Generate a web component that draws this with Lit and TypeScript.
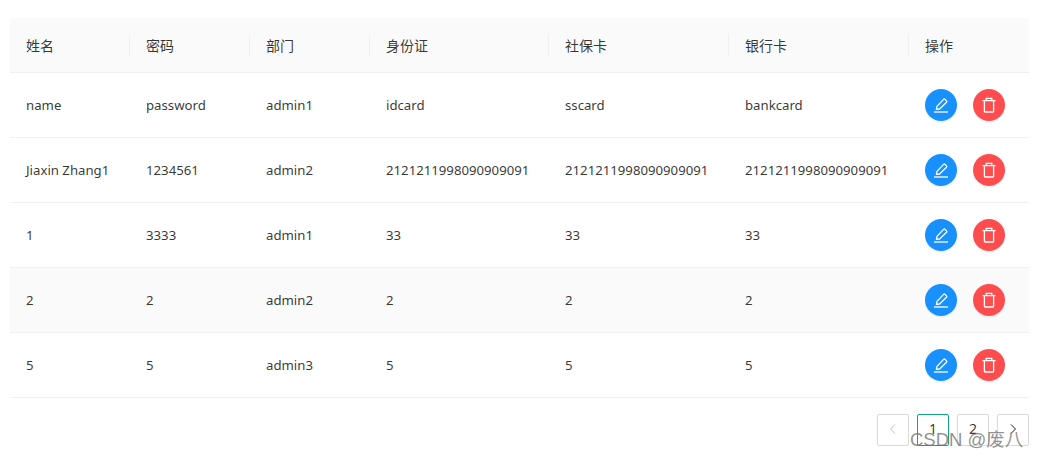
import { LitElement, html, css, svg } from "lit";
import { customElement } from "lit/decorators.js";

const HEAD = ["姓名", "密码", "部门", "身份证", "社保卡", "银行卡", "操作"];
const ROWS = [
  ["name", "password", "admin1", "idcard", "sscard", "bankcard"],
  ["Jiaxin Zhang1", "1234561", "admin2", "2121211998090909091", "2121211998090909091", "2121211998090909091"],
  ["1", "3333", "admin1", "33", "33", "33"],
  ["2", "2", "admin2", "2", "2", "2"],
  ["5", "5", "admin3", "5", "5", "5"],
];

const editIcon = svg`<svg viewBox="0 0 16 16" width="16" height="16" fill="none" stroke="#fff" stroke-width="1.3"><path d="M1 15h14" /><path d="M3.4 12.4 4 9.4 10.6 2.4a1 1 0 0 1 1.4 0l1.5 1.5a1 1 0 0 1 0 1.4L6.6 12z" stroke-linejoin="round"/></svg>`;
const delIcon = svg`<svg viewBox="0 0 16 16" width="16" height="16" fill="none" stroke="#fff" stroke-width="1.3"><path d="M1.5 3.6h13" /><path d="M5.2 3.4V1.4h5.6v2" /><path d="M3.4 3.6v10.6a.8.8 0 0 0 .8.8h7.6a.8.8 0 0 0 .8-.8V3.6" /></svg>`;

@customElement("app-root")
export class AppRoot extends LitElement {
  static styles = css`
    :host {
      display: block;
      position: relative;
      width: 1037px;
      height: 461px;
      overflow: hidden;
      background: #fff;
      font-family: "Noto Sans", "Noto Sans CJK SC", sans-serif;
      font-size: 13.2px;
      color: rgba(0, 0, 0, 0.8);
    }
    .wrap { padding: 18px 8px 0 10px; }
    .row {
      display: grid;
      grid-template-columns: 120px 120px 120px 179px 180px 180px 120px;
      align-items: center;
      height: 65px;
      box-sizing: border-box;
      border-bottom: 1px solid #f0f0f0;
    }
    .row.head {
      height: 55px;
      background: #fafafa;
    }
    .row.alt { background: #fafafa; }
    .cell { padding-left: 16px; white-space: nowrap; }
    .head .cell { position: relative; font-size: 14px; }
    .head .cell + .cell::before {
      content: "";
      position: absolute;
      left: -1px;
      top: 50%;
      height: 22px;
      margin-top: -11px;
      width: 1px;
      background: #f0f0f0;
    }
    .ops { display: flex; gap: 16px; }
    .btn {
      width: 32px;
      height: 32px;
      border-radius: 50%;
      display: flex;
      align-items: center;
      justify-content: center;
      box-shadow: 0 2px 0 rgba(0, 0, 0, 0.045);
    }
    .edit { background: #1890ff; }
    .del { background: #ff4d4f; }
    .pager {
      display: flex;
      justify-content: flex-end;
      gap: 8px;
      margin-top: 16px;
    }
    .page {
      width: 32px;
      height: 32px;
      box-sizing: border-box;
      border: 1px solid #d9d9d9;
      border-radius: 2px;
      display: flex;
      align-items: center;
      justify-content: center;
      font-size: 14px;
      padding-bottom: 3px;
    }
    .page.on { border-color: #10a37f; }
    .mark {
      position: absolute;
      left: 910px;
      top: 426px;
      font-family: "Liberation Sans", "Noto Sans CJK SC", sans-serif;
      font-size: 18.5px;
      line-height: 28px;
      color: rgba(110, 110, 110, 0.75);
      white-space: nowrap;
    }
  `;

  render() {
    return html`<div class="wrap">
        <div class="row head">${HEAD.map((h) => html`<div class="cell">${h}</div>`)}</div>
        ${ROWS.map(
          (r, i) => html`<div class="row ${i === 3 ? "alt" : ""}">
            ${r.map((c) => html`<div class="cell">${c}</div>`)}
            <div class="cell ops">
              <div class="btn edit">${editIcon}</div>
              <div class="btn del">${delIcon}</div>
            </div>
          </div>`
        )}
        <div class="pager">
          <div class="page"><svg width="12" height="12" viewBox="0 0 12 12" fill="none" stroke="#bfbfbf"><path d="M8 1.5 3.5 6 8 10.5"/></svg></div>
          <div class="page on">1</div>
          <div class="page">2</div>
          <div class="page"><svg width="12" height="12" viewBox="0 0 12 12" fill="none" stroke="#222"><path d="M4 1.5 8.5 6 4 10.5"/></svg></div>
        </div>
      </div>
      <div class="mark">CSDN @废八</div>`;
  }
}
